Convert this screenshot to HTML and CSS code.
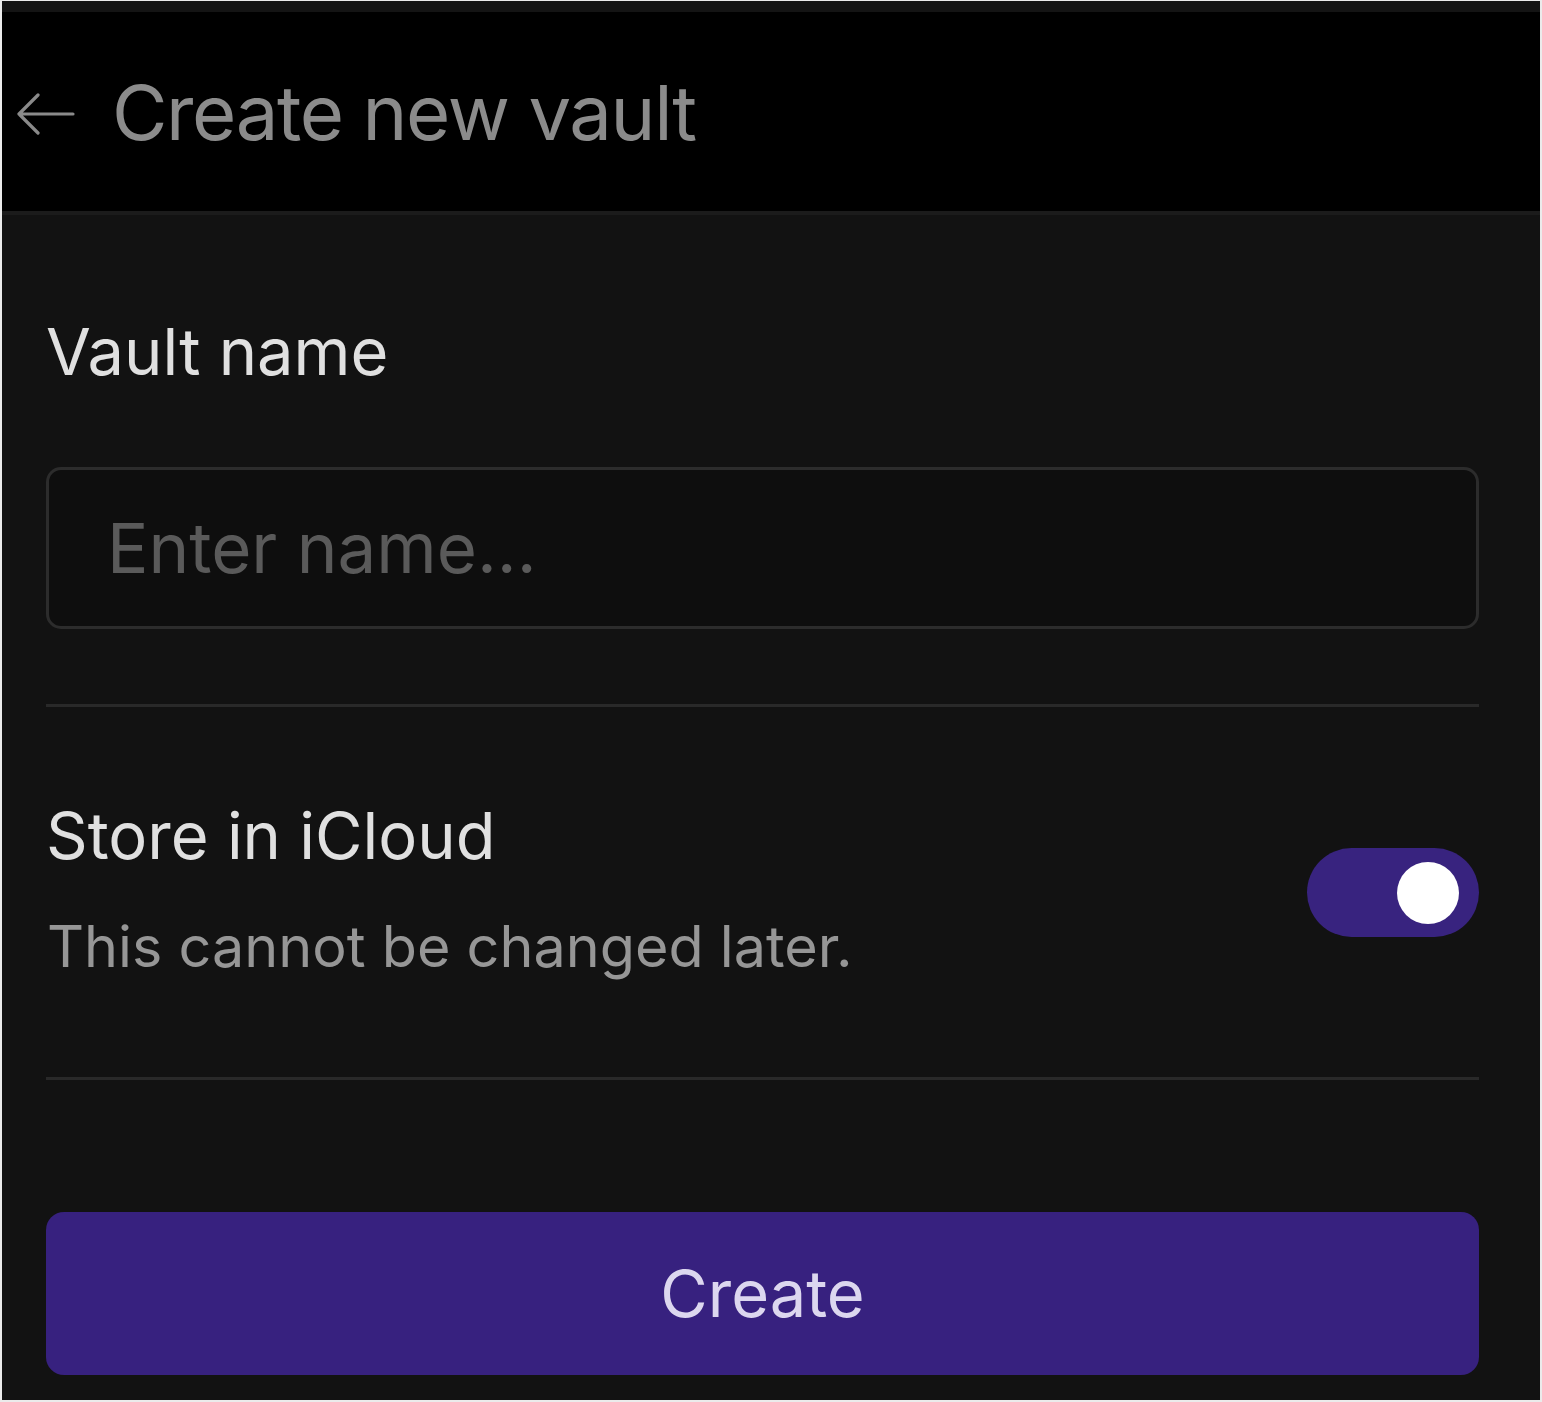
FILE: index.html
```html
<!DOCTYPE html>
<html lang="en">
<head>
<meta charset="utf-8">
<title>Create new vault</title>
<link rel="stylesheet" href="styles.css">
</head>
<body>
<div class="frame">
  <div class="status-strip"></div>
  <header class="header">
    <svg class="back" width="60" height="42" viewBox="0 0 60 42" aria-hidden="true">
      <path d="M58 21 H4 M23 2 L4 21 L23 40" fill="none" stroke="#8a8a8a" stroke-width="3.2" stroke-linecap="round" stroke-linejoin="round"/>
    </svg>
    <h1 class="title">Create new vault</h1>
  </header>
  <main class="content">
    <div class="label">Vault name</div>
    <input class="name-input" type="text" placeholder="Enter name...">
    <div class="divider"></div>
    <div class="toggle-row">
      <div class="toggle-text">
        <div class="label">Store in iCloud</div>
        <div class="desc">This cannot be changed later.</div>
      </div>
      <div class="switch"><div class="knob"></div></div>
    </div>
    <div class="divider"></div>
    <button class="create-btn" type="button">Create</button>
  </main>
</div>
</body>
</html>
```
FILE: styles.css
```css
html, body {
  margin: 0;
  padding: 0;
  background: #ebebeb;
}
body {
  font-family: Inter, "Noto Sans", sans-serif;
}
.frame {
  margin: 1px 2px 0 2px;
  width: 1538px;
  height: 1399px;
  background: #121212;
  display: flex;
  flex-direction: column;
  overflow: hidden;
}
.status-strip {
  height: 11px;
  background: #141414;
}
.header {
  height: 199px;
  background: #000;
  border-bottom: 4px solid #1b1b1b;
  display: flex;
  align-items: center;
  box-sizing: content-box;
}
.back {
  margin-left: 13px;
  margin-top: 4px;
  flex: none;
}
.title {
  margin: 0 0 0 37px;
  font-weight: 400;
  font-size: 76px;
  line-height: 96px;
  color: #8b8b8b;
  letter-spacing: -1.4px;
}
.content {
  flex: 1;
  padding: 97px 61px 0 44px;
  display: flex;
  flex-direction: column;
}
.label {
  font-size: 65px;
  line-height: 80px;
  color: #e0e0e0;
  margin-left: 0;
}
.name-input {
  margin-top: 75px;
  height: 162px;
  box-sizing: border-box;
  width: 100%;
  background: #0e0e0e;
  border: 3px solid #2c2c2c;
  border-radius: 15px;
  padding: 0 0 0 58px;
  font-family: Inter, "Noto Sans", sans-serif;
  font-size: 69px;
  color: #e0e0e0;
  outline: none;
}
.name-input::placeholder {
  color: #5a5a5a;
}
.divider {
  height: 3px;
  background: #292929;
  margin-top: 75px;
}
.toggle-row {
  display: flex;
  align-items: center;
  justify-content: space-between;
  padding: 89px 0 95px 0;
}
.toggle-text {
  display: flex;
  flex-direction: column;
  gap: 34px;
}
.toggle-row + .divider {
  margin-top: 0;
}
.desc {
  font-size: 57.5px;
  line-height: 72px;
  color: #969696;
  margin-left: 1px;
}
.switch {
  width: 172px;
  height: 89px;
  border-radius: 45px;
  background: #38237f;
  display: flex;
  align-items: center;
  justify-content: flex-end;
  padding-right: 20px;
  box-sizing: border-box;
  margin-top: 7px;
}
.knob {
  width: 62px;
  height: 62px;
  border-radius: 50%;
  background: #fff;
}
.create-btn {
  margin-top: 132px;
  height: 163px;
  width: 100%;
  border: none;
  border-radius: 18px;
  background: #37217f;
  color: #dcd7ef;
  font-family: Inter, "Noto Sans", sans-serif;
  font-size: 65px;
  padding: 0;
  cursor: pointer;
}
```
